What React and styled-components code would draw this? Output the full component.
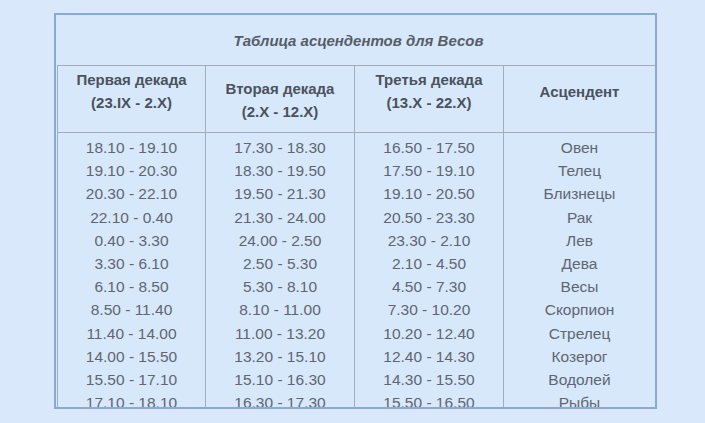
import React from "react";
import styled, { createGlobalStyle } from "styled-components";

const GlobalStyle = createGlobalStyle`
  html, body {
    margin: 0;
    padding: 0;
    background: #d9e8fa;
    font-family: "Liberation Sans", Arial, sans-serif;
  }
`;

const rows = [
  ["18.10 - 19.10", "17.30 - 18.30", "16.50 - 17.50", "Овен"],
  ["19.10 - 20.30", "18.30 - 19.50", "17.50 - 19.10", "Телец"],
  ["20.30 - 22.10", "19.50 - 21.30", "19.10 - 20.50", "Близнецы"],
  ["22.10 - 0.40", "21.30 - 24.00", "20.50 - 23.30", "Рак"],
  ["0.40 - 3.30", "24.00 - 2.50", "23.30 - 2.10", "Лев"],
  ["3.30 - 6.10", "2.50 - 5.30", "2.10 - 4.50", "Дева"],
  ["6.10 - 8.50", "5.30 - 8.10", "4.50 - 7.30", "Весы"],
  ["8.50 - 11.40", "8.10 - 11.00", "7.30 - 10.20", "Скорпион"],
  ["11.40 - 14.00", "11.00 - 13.20", "10.20 - 12.40", "Стрелец"],
  ["14.00 - 15.50", "13.20 - 15.10", "12.40 - 14.30", "Козерог"],
  ["15.50 - 17.10", "15.10 - 16.30", "14.30 - 15.50", "Водолей"],
  ["17.10 - 18.10", "16.30 - 17.30", "15.50 - 16.50", "Рыбы"],
];

const headers = [
  { lines: ["Первая декада", "(23.IX - 2.X)"], top: 2, width: 148 },
  { lines: ["Вторая декада", "(2.X - 12.X)"], top: 11, width: 149 },
  { lines: ["Третья декада", "(13.X - 22.X)"], top: 2, width: 149 },
  { lines: ["Асцендент"], top: 14, width: 152 },
];

const Page = styled.div`
  padding: 13px 0 0 54px;
`;

const Frame = styled.div`
  width: 599px;
  height: 392px;
  border: 2px solid #8aa9d5;
  background: #d7e8fb;
  overflow: hidden;
`;

const Title = styled.div`
  height: 50px;
  display: flex;
  align-items: center;
  justify-content: center;
  padding-left: 6px;
  font-size: 15px;
  font-weight: bold;
  font-style: italic;
  color: #575d66;
`;

const Table = styled.table`
  width: 598px;
  margin-left: 1px;
  border-collapse: collapse;
  table-layout: fixed;
`;

const HeadCell = styled.th`
  width: ${(p) => p.$width}px;
  height: 67px;
  box-sizing: border-box;
  padding: ${(p) => p.$top}px 0 0;
  vertical-align: top;
  border: 1px solid #a2adbb;
  font-size: 15px;
  line-height: 23px;
  font-weight: bold;
  color: #4b525c;
  text-align: center;
`;

const Cell = styled.td`
  padding: ${(p) => (p.$first ? "3px" : "0")} 0 0;
  border-left: 1px solid #a2adbb;
  border-right: 1px solid #a2adbb;
  font-size: 15.5px;
  line-height: 23.2px;
  color: #5f6671;
  text-align: center;
  white-space: nowrap;
`;

export default function App() {
  return (
    <>
      <GlobalStyle />
      <Page>
        <Frame>
          <Title>Таблица асцендентов для Весов</Title>
          <Table>
            <thead>
              <tr>
                {headers.map((h, i) => (
                  <HeadCell key={i} $top={h.top} $width={h.width}>
                    {h.lines.map((l, j) => (
                      <div key={j}>{l}</div>
                    ))}
                  </HeadCell>
                ))}
              </tr>
            </thead>
            <tbody>
              {rows.map((r, i) => (
                <tr key={i}>
                  {r.map((c, j) => (
                    <Cell key={j} $first={i === 0}>
                      {c}
                    </Cell>
                  ))}
                </tr>
              ))}
            </tbody>
          </Table>
        </Frame>
      </Page>
    </>
  );
}
